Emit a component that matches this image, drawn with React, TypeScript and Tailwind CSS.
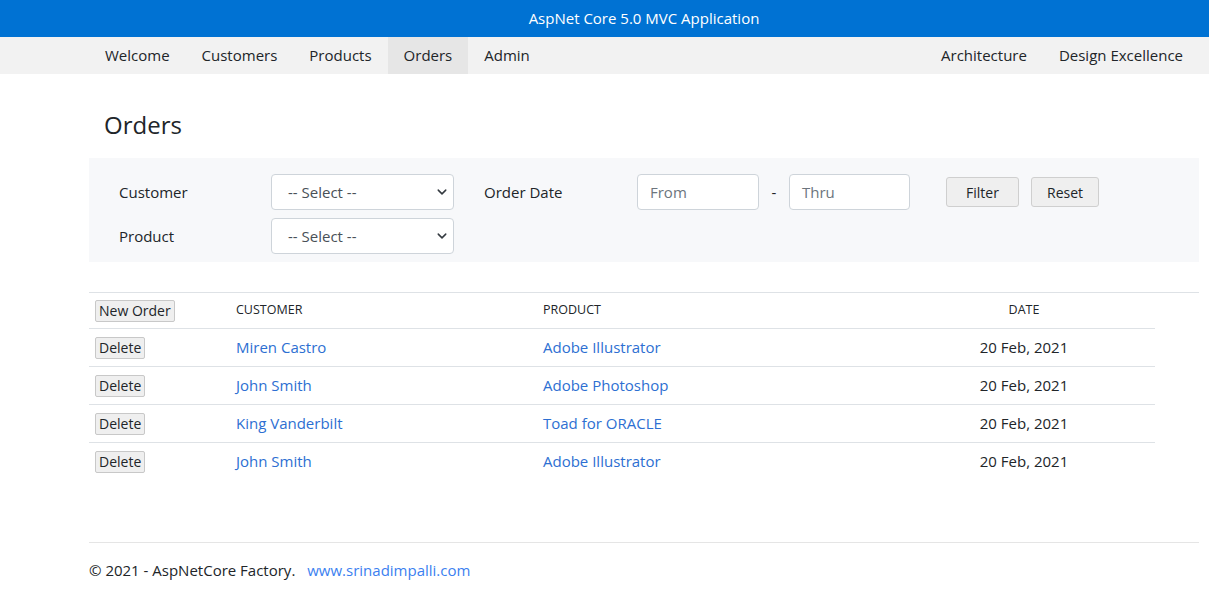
import React from "react";

const rows = [
  { c: "Miren Castro", p: "Adobe Illustrator", d: "20 Feb, 2021" },
  { c: "John Smith", p: "Adobe Photoshop", d: "20 Feb, 2021" },
  { c: "King Vanderbilt", p: "Toad for ORACLE", d: "20 Feb, 2021" },
  { c: "John Smith", p: "Adobe Illustrator", d: "20 Feb, 2021" },
];

function Chevron() {
  return (
    <svg width="10" height="10" viewBox="0 0 16 16" className="shrink-0">
      <path d="M2 5l6 6 6-6" fill="none" stroke="#343a40" strokeWidth="2.4" strokeLinecap="round" strokeLinejoin="round" />
    </svg>
  );
}

function Select() {
  return (
    <div className="flex h-[36px] w-[183px] items-center justify-between rounded-[4px] border border-[#ced4da] bg-white pl-[16px] pr-[6px] text-[15px] text-[#495057]">
      <span>-- Select --</span>
      <Chevron />
    </div>
  );
}

export default function App() {
  return (
    <div className="w-[1209px] overflow-hidden bg-white text-[#212529]" style={{ fontFamily: '"Open Sans", "Noto Sans", sans-serif' }}>
      <div className="w-[1288px]">
        <div className="flex h-[37px] items-center justify-center bg-[#0072d3] text-[15px] text-white">
          AspNet Core 5.0 MVC Application
        </div>
        <div className="h-[37px] bg-[#f2f2f2]">
          <div className="mx-auto flex h-full w-[1140px] justify-between px-[15px] text-[15px] text-[#212529]">
            <div className="flex h-full">
              <span className="flex items-center px-4">Welcome</span>
              <span className="flex items-center px-4">Customers</span>
              <span className="flex items-center px-4">Products</span>
              <span className="flex items-center bg-[#e6e6e6] px-4">Orders</span>
              <span className="flex items-center px-4">Admin</span>
            </div>
            <div className="flex h-full">
              <span className="flex items-center px-4">Architecture</span>
              <span className="flex items-center px-4">Design Excellence</span>
            </div>
          </div>
        </div>

        <div className="mx-auto w-[1140px] px-[15px]">
          <h2 className="mt-[36px] pl-[15px] text-[24px] leading-[29px]">Orders</h2>

          <div className="mt-[19px] flex flex-col gap-[8px] bg-[#f7f8fa] pb-[8px] pl-[30px] pt-[16px] text-[15px]">
            <div className="flex items-center">
              <span className="w-[152px]">Customer</span>
              <Select />
              <span className="ml-[30px] w-[153px]">Order Date</span>
              <div className="flex h-[36px] w-[122px] items-center rounded-[4px] border border-[#ced4da] bg-white pl-[12px] text-[#6c757d]">From</div>
              <span className="w-[30px] text-center">-</span>
              <div className="flex h-[36px] w-[121px] items-center rounded-[4px] border border-[#ced4da] bg-white pl-[12px] text-[#6c757d]">Thru</div>
              <button className="ml-[36px] h-[30px] w-[73px] rounded-[3px] border border-[#cfcfcf] bg-[#efefef] text-[14px]">Filter</button>
              <button className="ml-[12px] h-[30px] w-[68px] rounded-[3px] border border-[#cfcfcf] bg-[#efefef] text-[14px]">Reset</button>
            </div>
            <div className="flex items-center">
              <span className="w-[152px]">Product</span>
              <Select />
            </div>
          </div>

          <div className="mt-[30px] border-t border-[#dee2e6]">
            <div className="w-[1066px]">
              <div className="grid h-[35px] grid-cols-[141px_307px_356px_262px] items-center text-[12.5px] uppercase">
                <div className="pl-[6px]">
                  <button className="h-[22px] rounded-[2px] border border-[#c8c8c8] bg-[#efefef] px-[3px] text-[14px] normal-case leading-none">New Order</button>
                </div>
                <div className="pl-[6px]">Customer</div>
                <div className="pl-[6px]">Product</div>
                <div className="text-center">Date</div>
              </div>
              {rows.map((r, i) => (
                <div key={i} className="grid h-[38px] grid-cols-[141px_307px_356px_262px] items-center border-t border-[#dee2e6] text-[15px]">
                  <div className="pl-[6px]">
                    <button className="h-[22px] rounded-[2px] border border-[#c8c8c8] bg-[#efefef] px-[3px] text-[14px] leading-none">Delete</button>
                  </div>
                  <div className="pl-[6px] text-[#2d6fd2]">{r.c}</div>
                  <div className="pl-[6px] text-[#2d6fd2]">{r.p}</div>
                  <div className="text-center">{r.d}</div>
                </div>
              ))}
            </div>
          </div>

          <div className="mt-[62px] border-t border-[#e5e5e5] pt-[15px] text-[15px] leading-[24px]">
            © 2021 - AspNetCore Factory. <span className="ml-[8px] text-[#3b7ff0]">www.srinadimpalli.com</span>
          </div>
          <div className="h-[30px]" />
        </div>
      </div>
    </div>
  );
}
